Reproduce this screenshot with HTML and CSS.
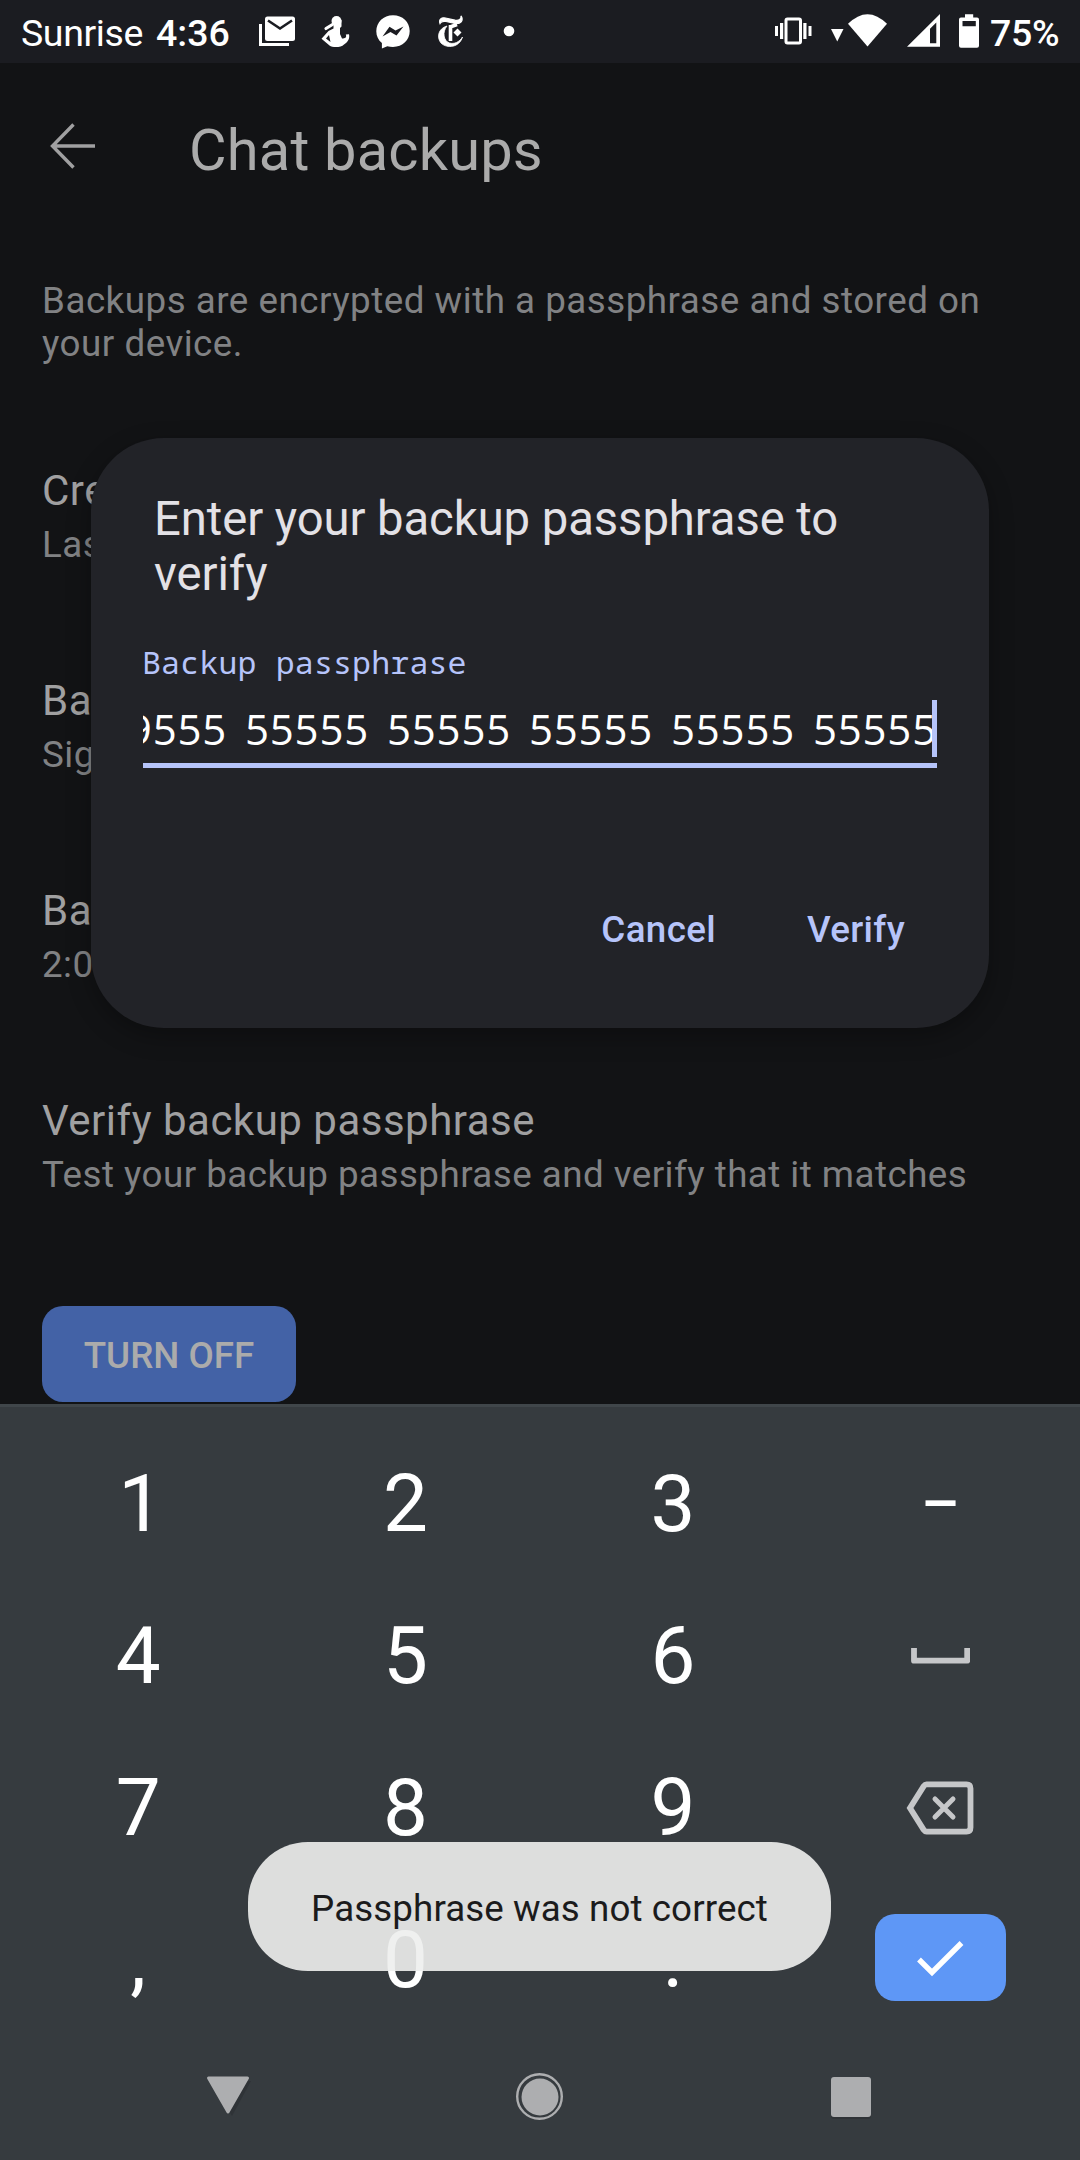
FILE: index.html
```html
<!DOCTYPE html>
<html lang="en">
<head>
<meta charset="utf-8">
<title>Chat backups</title>
<link rel="stylesheet" href="styles.css">
</head>
<body>
<header class="status">
  <span class="carrier">Sunrise</span>
  <span class="clock">4:36</span>
  <svg class="notifications" width="260" height="63" viewBox="256 0 260 63">
    <path d="M260.500 24V44.500H289" fill="none" stroke="#fff" stroke-width="3"/>
    <rect x="265" y="16.500" width="30" height="24.500" rx="2.500" fill="#fff"/>
    <path d="M268 20.500L280 28.500L292 20.500" fill="none" stroke="#1b1c21" stroke-width="2.600"/>
    <circle cx="336.500" cy="21" r="5" fill="#fff"/>
    <path fill="#fff" fill-rule="evenodd" d="M341.500 20V26.500L340 28V34L342 38.500C345 38.500 347 37.500 345.800 34.500L349 34.200C350 38.500 348 42 344 44.500C341 47.800 332.500 47.800 329.500 45.500L321.500 38.800L328.500 31L333.500 28.500V20ZM329 35L326 38.500L330.500 42Z"/>
    <path d="M332.500 24.500L326 28.500" stroke="#fff" stroke-width="3.200" stroke-linecap="round"/>
    <path d="M393 15.200c-9.600 0-16.700 6.900-16.700 16.100 0 4.700 2 9 5.600 11.800v5.400l5.400-2.300c1.800.5 3.700.7 5.700.7 9.600 0 16.700-6.800 16.700-15.900S402.600 15.200 393 15.200z" fill="#fff"/>
    <path d="M382.500 36.500L389.500 26.800L395.500 30.500L403.500 26.500L396.500 35.500L390.500 32Z" fill="#1b1c21"/>
    <path d="M440 23.500C438.500 19.500 441.500 17 445.500 18L455 20.200C459 21 461.500 19 461 15.800C464 20.500 460.500 24.500 455 23.500L446 21.500C442.500 20.800 441 21.500 440 23.500Z" fill="#fff" stroke="#fff" stroke-width="1.200"/>
    <path d="M447 26C438 28.500 436.500 37.500 441 43C447 49 459.500 47.500 462.500 37C459.500 42 454 44.500 449.500 43C443.500 41 442 32 447 26Z" fill="#fff" stroke="#fff" stroke-width=".8"/>
    <path d="M450.500 25V41M450 27L457 24.500" fill="none" stroke="#fff" stroke-width="3.600"/>
    <path d="M457.500 28.500L461.500 32.500L457.500 36.500L453.500 32.500Z" fill="#fff"/>
    <circle cx="509" cy="31" r="5.300" fill="#fff"/>
  </svg>
  <svg class="system" width="210" height="63" viewBox="772 0 210 63" fill="#fff">
    <rect x="786" y="19" width="14.500" height="24" rx="1.500" fill="none" stroke="#fff" stroke-width="3"/>
    <path d="M775 26h3v10h-3zM780 23h3.200v16H780zM803.300 23h3.200v16h-3.200zM808.500 26h3v10h-3z"/>
    <path d="M831 29h12.500l-6.250 12.500z"/>
    <path d="M848 23.800Q867.500 4.500 887 23.800L867.500 46.500z"/>
    <path fill-rule="evenodd" d="M907 46.700L940 14V46.700zM930 28.800V43.300h6.300V22.500z"/>
    <path fill-rule="evenodd" d="M965 14.200h8.200v3.300h3.800q2 0 2 2V45.700q0 2-2 2H961q-2 0-2-2V19.500q0-2 2-2h4zM962.500 21v5.200h13.300V21z"/>
  </svg>
  <span class="percent">75%</span>
</header>

<main class="app">
  <div class="toolbar">
    <svg class="back" width="46" height="46" viewBox="0 0 46 46" fill="none" stroke="#a0a0a1" stroke-width="3.400"><path d="M45 23H3M23.500 1.500L2.500 23L23.500 44.500"/></svg>
    <h1 class="page-title">Chat backups</h1>
  </div>
  <p class="intro">Backups are encrypted with a passphrase and stored on your device.</p>
  <div class="item"><div class="item-title">Create backup</div><div class="item-sub">Last backup</div></div>
  <div class="item"><div class="item-title">Backup folder</div><div class="item-sub">Signal</div></div>
  <div class="item"><div class="item-title">Backup time</div><div class="item-sub">2:00 AM</div></div>
  <div class="item"><div class="item-title">Verify backup passphrase</div><div class="item-sub">Test your backup passphrase and verify that it matches</div></div>
  <div class="turn-off">TURN OFF</div>
</main>

<section class="keyboard">
  <div class="keys">
    <span class="key one">1</span><span class="key">2</span><span class="key">3</span><span class="key dash">–</span>
    <span class="key">4</span><span class="key">5</span><span class="key">6</span>
    <span class="key"><svg width="60" height="16" viewBox="0 0 60 16" fill="none" stroke="#c6c7c9" stroke-width="5.800" stroke-linejoin="round"><path d="M4 0V12.700H57.200V0"/></svg></span>
    <span class="key">7</span><span class="key">8</span><span class="key">9</span>
    <span class="key"><svg width="68" height="54" viewBox="0 0 68 54" fill="none" stroke="#c6c7c9" stroke-width="5.800"><path d="M20.500 3.400H60.500Q64.500 3.400 64.500 7.400V46.600Q64.500 50.600 60.500 50.600H20.500Q19 50.600 17.700 48.800L4 27L17.700 5.200Q19 3.400 20.500 3.400Z"/><path d="M29 18L47 36M47 18L29 36" stroke-linecap="round" stroke-width="5"/></svg></span>
    <span class="key">,</span><span class="key">0</span><span class="key">.</span>
    <span class="key"><span class="enter"><svg width="48" height="38" viewBox="0 0 48 38" fill="none" stroke="#fff" stroke-width="5.400"><path d="M3 20.500L16 33.500L45.500 4"/></svg></span></span>
  </div>
  <nav class="nav">
    <svg width="52" height="52" viewBox="0 0 52 52"><path d="M9 9H49L30 44Z" fill="#2f3337"/><path d="M6.500 6H45.500L26 40Z" fill="#adaeb0" stroke="#adaeb0" stroke-width="3" stroke-linejoin="round"/></svg>
    <svg width="52" height="52" viewBox="0 0 52 52"><circle cx="26.500" cy="24.500" r="22.300" fill="none" stroke="#adaeb0" stroke-width="2.400"/><circle cx="27" cy="25" r="18.500" fill="#adaeb0"/></svg>
    <svg width="52" height="52" viewBox="0 0 52 52"><rect x="6" y="8" width="40" height="39" rx="3" fill="#2f3337"/><rect x="6" y="5" width="40" height="40" rx="3" fill="#adaeb0"/></svg>
  </nav>
</section>

<section class="dialog">
  <h2 class="dialog-title">Enter your backup passphrase to verify</h2>
  <div class="label">Backup passphrase</div>
  <div class="field"><span class="value">9555 55555 55555 55555 55555 55555</span><span class="cursor"></span></div>
  <div class="actions"><span class="action">Cancel</span><span class="action">Verify</span></div>
</section>
<div class="toast">Passphrase was not correct</div>
</body>
</html>
```
FILE: styles.css
```css
* { box-sizing: border-box; }
body {
  margin: 0; width: 1080px; height: 2160px; position: relative; overflow: hidden;
  display: flex; flex-direction: column;
  font-family: Roboto, "Noto Sans", sans-serif; background: #121315; color: #a0a0a1;
}
h1, h2, p { margin: 0; font-weight: 400; }
svg { display: block; flex: none; }

.status {
  height: 63px; flex: none; display: flex; align-items: center; padding: 0 20px 0 21px;
  background: #1b1c21; color: #fff; font-size: 37.500px; line-height: 63px; white-space: nowrap;
}
.carrier { width: 135px; padding-top: 3px; letter-spacing: -.4px; }
.clock { width: 100px; font-weight: 500; padding-top: 3px; }
.system { margin-left: auto; }
.percent { width: 70px; margin-left: 8px; font-weight: 500; padding-top: 3px; letter-spacing: -.3px; }

.app { flex: 1; min-height: 0; overflow: hidden; padding: 0 42px; }
.toolbar { height: 174px; display: flex; align-items: center; padding-left: 8px; }
.back { margin-bottom: 8px; }
.page-title { margin-left: 93px; font-size: 57.750px; line-height: 68px; letter-spacing: .2px; color: #ababab; white-space: nowrap; }
.intro { margin: 41.500px 0 101.500px; font-size: 36.750px; line-height: 43px; letter-spacing: .5px; color: #818284; }
.item { height: 100px; margin-bottom: 110px; white-space: nowrap; }
.item-title { font-size: 42px; line-height: 49px; margin-bottom: 8px; letter-spacing: .5px; color: #a0a0a1; }
.item-sub { font-size: 36.750px; line-height: 43px; letter-spacing: .46px; color: #818284; }
.turn-off {
  width: 254px; height: 96px; border-radius: 21px; background: #4362a6; color: #ababab;
  font-size: 36.750px; font-weight: 500; line-height: 99px; text-align: center;
}

.keyboard { height: 756px; flex: none; background: #363b3f; border-top: 3px solid #40464a; display: flex; flex-direction: column; }
.keys {
  display: grid; grid-template-columns: repeat(4, 1fr); grid-auto-rows: 152px;
  padding: 21px 6px 0 4.500px; color: #fff; font-size: 80px; line-height: 152px;
}
.key { display: flex; align-items: center; justify-content: center; }
.one { padding-left: 5px; }
.dash { font-size: 60px; font-weight: 500; }
.enter {
  width: 131px; height: 87px; border-radius: 20px; background: #5e97f6; margin-bottom: 5px;
  display: flex; align-items: center; justify-content: center;
}
.nav { flex: 1; display: flex; justify-content: space-around; align-items: center; padding: 0 73px 0 72px; }

.dialog {
  position: absolute; left: 91px; top: 438px; width: 898px; height: 590px;
  border-radius: 73px; background: #222328; padding: 54px 52px 0;
  box-shadow: 0 8px 24px rgba(0, 0, 0, .3);
}
.dialog-title { padding-left: 11px; font-size: 47.250px; line-height: 55px; letter-spacing: -.08px; color: #e3e1e6; }
.label {
  margin: 42px 0 0 -1px; color: #b6c4fa; line-height: 36px; height: 36px; letter-spacing: .2px;
  font-family: "Droid Sans Mono", "Noto Sans Mono", "DejaVu Sans Mono", monospace; font-size: 31.500px;
}
.field {
  height: 68px; margin-top: 20px; display: flex; justify-content: flex-end;
  overflow: hidden; border-bottom: 5px solid #b6c4fa; color: #fff;
}
.value {
  height: 57px; line-height: 58px; white-space: nowrap; margin-right: -5px;
  font-family: "Open Sans", "Noto Sans", sans-serif; font-size: 42px; letter-spacing: .8px; word-spacing: 6.200px;
}
.cursor { width: 5px; height: 57px; flex: none; background: #b6c4fa; }
.actions { display: flex; justify-content: flex-end; gap: 91px; margin-top: 140px; padding-right: 32px; }
.action { font-size: 36.750px; line-height: 43px; font-weight: 500; letter-spacing: .35px; color: #b6c4fa; }

.toast {
  position: absolute; left: 248px; top: 1842px; width: 583px; height: 129px; border-radius: 60px;
  background: rgba(237, 238, 237, .908); color: #1b1b1c; text-align: center;
  font-size: 36.750px; line-height: 133px; letter-spacing: .08px; white-space: nowrap;
}
```
